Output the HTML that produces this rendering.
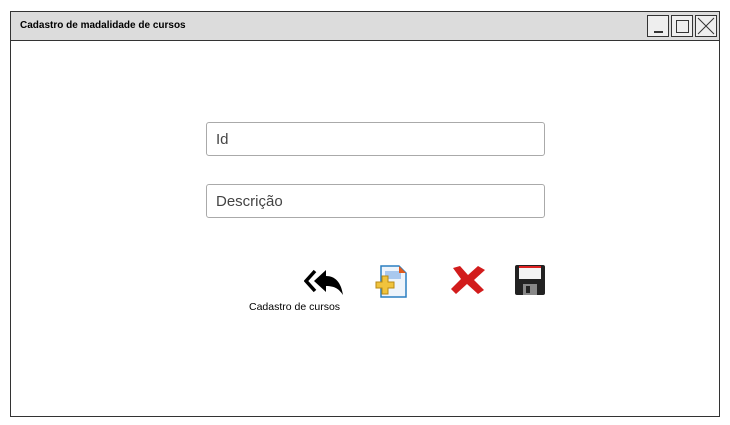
<!DOCTYPE html>
<html><head><style>
body{margin:0;width:730px;height:425px;background:#fff;position:relative;overflow:hidden;font-family:"Comic Sans MS","Liberation Sans",sans-serif}
.win{position:absolute;left:10px;top:11px;width:708px;height:404px;border:1px solid #333;}
.tb{position:absolute;left:0;top:0;width:708px;height:28px;background:#dcdcdc;border-bottom:1px solid #333}
.tt{position:absolute;left:9px;top:8px;font-size:10px;font-weight:bold;color:#000}
.bt{position:absolute;top:3px;width:22px;height:22px;border:1px solid #333;background:#eee;box-sizing:border-box}
.in{position:absolute;left:206px;width:339px;height:34px;border:1px solid #aaa;border-radius:3px;box-sizing:border-box;font-size:15px;color:#444;padding:8px 0 0 9px}
.lbl{position:absolute;left:249px;top:301px;font-size:10.5px;color:#000}
</style></head><body>
<div class="win"><div class="tb"><div class="tt">Cadastro de madalidade de cursos</div>
<div class="bt" style="left:636px"><div style="position:absolute;left:6px;top:15px;width:9px;height:2px;background:#333"></div></div>
<div class="bt" style="left:660px"><div style="position:absolute;left:4px;top:4px;width:11px;height:11px;border:1px solid #333"></div></div>
<div class="bt" style="left:684px"><svg width="20" height="20" style="position:absolute;left:0;top:0"><path d="M2 2L18 18M18 2L2 18" stroke="#333"/></svg></div>
</div></div>
<div class="in" style="top:122px">Id</div>
<div class="in" style="top:184px">Descrição</div>
<svg style="position:absolute;left:304px;top:269px" width="40" height="28"><path d="M11 2L2 12L11 22" fill="none" stroke="#000" stroke-width="3.5"/><path d="M22 1L10 12L22 23V17C31 17 35 20 39 26C37 13 31 7 22 7Z" fill="#000"/></svg>
<svg style="position:absolute;left:373px;top:264px" width="36" height="36"><path d="M8 2H26L33 9V33H8Z" fill="#eef4fb" stroke="#2a7fc1" stroke-width="1.5"/><rect x="12" y="7" width="16" height="8" fill="#a9c8ee"/><path d="M26 2V9H33Z" fill="#e05a1c"/><path d="M9 12H15V18H21V24H15V30H9V24H3V18H9Z" fill="#f0c33c" stroke="#b88a15"/></svg>
<svg style="position:absolute;left:448px;top:264px" width="40" height="32"><path d="M5 4L12 2L20 11L30 2L37 6L26 16L36 26L30 30L19 20L8 30L3 25L13 15Z" fill="#d21c1c"/></svg>
<svg style="position:absolute;left:514px;top:264px" width="32" height="32"><rect x="1" y="1" width="30" height="30" rx="2" fill="#222"/><rect x="5" y="2" width="22" height="13" fill="#f4f4f4"/><rect x="5" y="2" width="22" height="2" fill="#d22"/><rect x="9" y="20" width="14" height="11" fill="#888"/><rect x="12" y="22" width="4" height="7" fill="#222"/></svg>
<div class="lbl">Cadastro de cursos</div>
</body></html>
